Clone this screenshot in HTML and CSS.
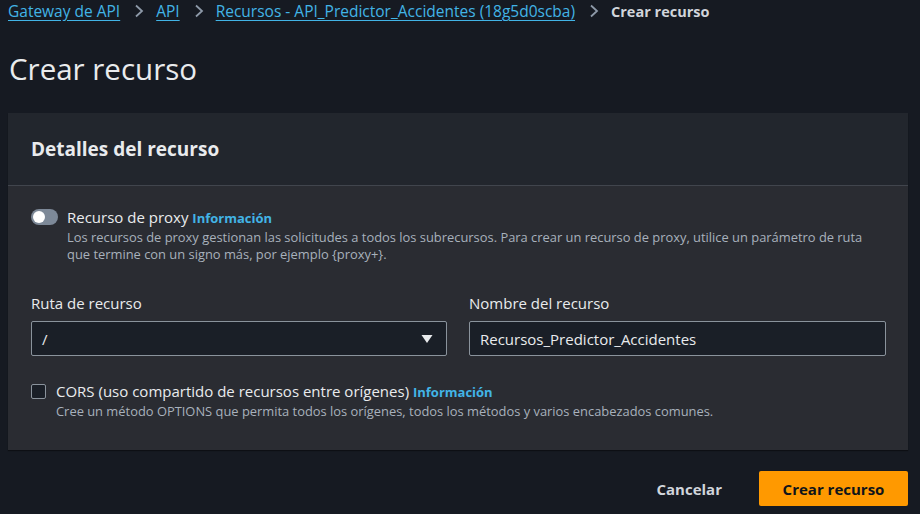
FILE: index.html
```html
<!DOCTYPE html>
<html lang="es">
<head>
<meta charset="utf-8">
<link rel="stylesheet" href="styles.css">
</head>
<body>
<div class="page">
  <nav class="crumbs">
    <a class="crumb-link">Gateway de API</a>
    <span class="chev"><svg width="10" height="14" viewBox="0 0 10 14"><path d="M2 1.5 L8 7 L2 12.5" fill="none" stroke="#8d99a8" stroke-width="1.8"/></svg></span>
    <a class="crumb-link">API</a>
    <span class="chev"><svg width="10" height="14" viewBox="0 0 10 14"><path d="M2 1.5 L8 7 L2 12.5" fill="none" stroke="#8d99a8" stroke-width="1.8"/></svg></span>
    <a class="crumb-link">Recursos - API_Predictor_Accidentes (18g5d0scba)</a>
    <span class="chev"><svg width="10" height="14" viewBox="0 0 10 14"><path d="M2 1.5 L8 7 L2 12.5" fill="none" stroke="#8d99a8" stroke-width="1.8"/></svg></span>
    <span class="crumb-current">Crear recurso</span>
  </nav>
  <h1 class="title">Crear recurso</h1>
  <section class="card">
    <header class="card-head">
      <h2 class="card-title">Detalles del recurso</h2>
    </header>
    <div class="card-body">
      <div class="option">
        <span class="toggle"><span class="knob"></span></span>
        <div class="option-text">
          <div class="option-label">Recurso de proxy <a class="info">Información</a></div>
          <div class="option-desc">Los recursos de proxy gestionan las solicitudes a todos los subrecursos. Para crear un recurso de proxy, utilice un parámetro de ruta que termine con un signo más, por ejemplo {proxy+}.</div>
        </div>
      </div>
      <div class="fields">
        <div class="field">
          <label class="field-label">Ruta de recurso</label>
          <div class="select">
            <span>/</span>
            <svg class="caret" width="12" height="10" viewBox="0 0 12 10"><path d="M0.5 1 H11.5 L6 9 Z" fill="#e9ebed"/></svg>
          </div>
        </div>
        <div class="field">
          <label class="field-label">Nombre del recurso</label>
          <div class="input">Recursos_Predictor_Accidentes</div>
        </div>
      </div>
      <div class="option cors">
        <span class="checkbox"></span>
        <div class="option-text">
          <div class="option-label">CORS (uso compartido de recursos entre orígenes) <a class="info">Información</a></div>
          <div class="option-desc">Cree un método OPTIONS que permita todos los orígenes, todos los métodos y varios encabezados comunes.</div>
        </div>
      </div>
    </div>
  </section>
  <div class="actions">
    <button class="btn-link">Cancelar</button>
    <button class="btn-primary">Crear recurso</button>
  </div>
</div>
</body>
</html>
```

FILE: styles.css
```css
* { box-sizing: border-box; }
html, body { margin: 0; padding: 0; }
body {
  background: #161a22;
  color: #e9ebed;
  font-family: "Open Sans", "Noto Sans", sans-serif;
  width: 920px;
  height: 514px;
  overflow: hidden;
}
.page {
  padding: 0 12px 0 8px;
}
.crumbs {
  display: flex;
  align-items: center;
  height: 22px;
  font-size: 15.5px;
}
.crumb-link {
  color: #42b4e6;
  text-decoration: underline;
  text-underline-offset: 3px;
}
.chev {
  display: flex;
  align-items: center;
  padding: 0 12px 0 14px;
}
.crumb-current {
  font-weight: 700;
  font-size: 14.5px;
  color: #d1d5db;
}
.title {
  margin: 0;
  padding: 25px 0 0 1px;
  font-size: 29.5px;
  font-weight: 400;
  line-height: 44px;
  height: 91px;
  color: #e9ebed;
}
.card {
  background: #2a2c32;
  box-shadow: 0 1px 1px rgba(0,0,0,0.4);
  height: 337px;
}
.card-head {
  background: #22262d;
  height: 73px;
  border-bottom: 1px solid #41454d;
  display: flex;
  align-items: center;
  padding-left: 23px;
}
.card-title {
  margin: 0;
  font-size: 19px;
  font-weight: 700;
  color: #e9ebed;
}
.card-body {
  padding: 22px 22px 0 23px;
}
.option {
  display: flex;
  gap: 9px;
}
.toggle {
  width: 27px;
  height: 16px;
  border-radius: 8px;
  background: #7d8998;
  position: relative;
  flex: none;
  margin-top: 1px;
}
.knob {
  position: absolute;
  left: 2px;
  top: 2px;
  width: 12px;
  height: 12px;
  border-radius: 50%;
  background: #ffffff;
}
.option-label {
  font-size: 15px;
  line-height: 18px;
  color: #e9ebed;
}
.info {
  color: #42b4e6;
  font-weight: 700;
  font-size: 13px;
}
.option-desc {
  font-size: 12.9px;
  line-height: 17px;
  color: #a8b1bc;
  margin-top: 2px;
}
.fields {
  display: grid;
  grid-template-columns: 416px 417px;
  gap: 22px;
  margin-top: 30px;
}
.field-label {
  display: block;
  font-size: 15px;
  line-height: 20px;
  color: #e9ebed;
  margin-bottom: 8px;
}
.select, .input {
  height: 35px;
  border: 1px solid #8a939c;
  border-radius: 2px;
  background: #1a1f27;
  display: flex;
  align-items: center;
  padding: 0 10px;
  font-size: 15px;
  color: #e9ebed;
}
.select {
  justify-content: space-between;
  padding-right: 13px;
}
.cors {
  margin-top: 26px;
  gap: 10px;
}
.checkbox {
  width: 15px;
  height: 15px;
  border: 1px solid #8a939c;
  border-radius: 2px;
  background: #1a1f27;
  flex: none;
  margin-top: 2px;
}
.actions {
  display: flex;
  justify-content: flex-end;
  align-items: center;
  gap: 37px;
  margin-top: 21px;
}
.btn-link {
  background: none;
  border: none;
  color: #d1d5db;
  font: inherit;
  font-size: 15px;
  font-weight: 700;
  padding: 0;
}
.btn-primary {
  background: #ff9900;
  border: none;
  border-radius: 2px;
  color: #0f141a;
  font: inherit;
  font-size: 15px;
  font-weight: 700;
  width: 149px;
  height: 35px;
}
```
